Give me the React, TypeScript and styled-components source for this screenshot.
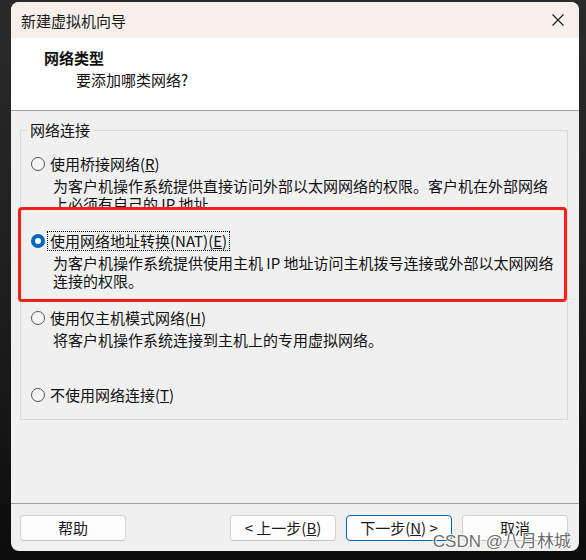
import React from "react";
import styled, { createGlobalStyle, css } from "styled-components";

const GlobalStyle = createGlobalStyle`
  html, body {
    margin: 0;
    padding: 0;
    background: #1f1f1f;
  }
  body {
    font-family: "Noto Sans CJK SC", "Noto Sans", sans-serif;
    color: #111;
  }
  * { box-sizing: border-box; }
`;

const Page = styled.div`
  width: 586px;
  height: 560px;
  padding: 2px 7px 9px 11px;
  background: linear-gradient(180deg, #2a2a2a 0%, #1c1c1c 60%, #0c0c0c 100%);
`;

const Window = styled.div`
  position: relative;
  width: 568px;
  height: 549px;
  display: flex;
  flex-direction: column;
  background: #f0f0f0;
  border-radius: 8px;
  overflow: hidden;
`;

const TitleBar = styled.div`
  height: 36px;
  flex: none;
  display: flex;
  align-items: center;
  justify-content: space-between;
  padding: 0 15px 0 10px;
  background: #f7f0ea;
  font-size: 15px;
  color: #1a1a1a;
`;

const Header = styled.div`
  height: 73px;
  flex: none;
  background: #ffffff;
  border-bottom: 1px solid #a0a0a0;
  padding: 10px 0 0 33px;
`;

const Heading = styled.div`
  font-size: 15px;
  font-weight: 700;
  line-height: 20px;
`;

const SubHeading = styled.div`
  font-size: 15px;
  line-height: 20px;
  margin: 2px 0 0 32px;
`;

const Body = styled.div`
  flex: 1;
  padding: 9px 11px 0 9px;
`;

const Group = styled.fieldset`
  margin: 0;
  padding: 0;
  min-width: 0;
  height: 300px;
  border: 1px solid #dadada;
  border-radius: 0;
`;

const GroupLabel = styled.legend`
  margin-left: 6px;
  padding: 0 3px;
  font-size: 15px;
  line-height: 20px;
`;

const Options = styled.div`
  display: flex;
  flex-direction: column;
  padding-top: 14px;
`;

const Option = styled.div`
  height: 77px;
  display: flex;
  flex-direction: column;
`;

const OptionTitle = styled.div`
  height: 20px;
  display: flex;
  align-items: center;
  gap: 3px;
  padding-left: 10px;
  font-size: 15px;
`;

const Radio = styled.span<{ $checked?: boolean }>`
  width: 14px;
  height: 14px;
  flex: none;
  border-radius: 50%;
  ${(p) =>
    p.$checked
      ? css`
          background: #0067c0;
          display: flex;
          align-items: center;
          justify-content: center;
          &::after {
            content: "";
            width: 6px;
            height: 6px;
            border-radius: 50%;
            background: #ffffff;
          }
        `
      : css`
          border: 1.3px solid #555555;
          background: #f5f5f5;
        `}
`;

const OptionLabel = styled.span<{ $focused?: boolean }>`
  padding: 0 2px;
  line-height: 18px;
  white-space: nowrap;
  ${(p) =>
    p.$focused &&
    css`
      outline: 1px dotted #000;
      outline-offset: 0;
    `}
`;

const Desc = styled.div<{ $clip?: number }>`
  margin-top: 3px;
  padding-left: 32px;
  font-size: 15px;
  line-height: 18px;
  white-space: nowrap;
  ${(p) =>
    p.$clip &&
    css`
      max-height: ${p.$clip}px;
      overflow: hidden;
    `}
`;

const Footer = styled.div`
  height: 48px;
  flex: none;
  display: flex;
  align-items: flex-start;
  gap: 10px;
  padding: 11px 11px 0 9px;
  border-top: 1px solid #a0a0a0;
`;

const Spacer = styled.div`
  flex: 1;
`;

const Button = styled.button<{ $primary?: boolean }>`
  width: 106px;
  height: 26px;
  padding: 0;
  border-radius: 4px;
  border: 1px solid ${(p) => (p.$primary ? "#0067c0" : "#d3d3d3")};
  border-bottom-color: ${(p) => (p.$primary ? "#0067c0" : "#c2c2c2")};
  background: #fdfdfd;
  font-family: "Noto Sans CJK SC", "Noto Sans", sans-serif;
  font-size: 15px;
  line-height: 22px;
  color: #1a1a1a;
`;

const Annotation = styled.div`
  position: absolute;
  left: 7px;
  top: 205px;
  width: 549px;
  height: 95px;
  border: 3px solid #f5201a;
  border-radius: 4px;
  pointer-events: none;
`;

const Watermark = styled.div`
  position: absolute;
  right: 8px;
  bottom: 0;
  font-family: "Liberation Sans", "Noto Sans CJK SC", sans-serif;
  font-size: 17px;
  line-height: 18px;
  color: rgba(70, 70, 70, 0.8);
  text-shadow: 1px 0 rgba(255, 255, 255, 0.8), -1px 0 rgba(255, 255, 255, 0.8),
    0 1px rgba(255, 255, 255, 0.8), 0 -1px rgba(255, 255, 255, 0.8);
  white-space: nowrap;
  pointer-events: none;
`;

const CloseIcon = () => (
  <svg width="12" height="12" viewBox="0 0 12 12" aria-hidden="true">
    <path d="M0.5 0.5L11.5 11.5M11.5 0.5L0.5 11.5" stroke="#1a1a1a" strokeWidth="1.1" fill="none" />
  </svg>
);

export default function App() {
  return (
    <>
      <GlobalStyle />
      <Page>
        <Window>
          <TitleBar>
            <span>新建虚拟机向导</span>
            <CloseIcon />
          </TitleBar>
          <Header>
            <Heading>网络类型</Heading>
            <SubHeading>要添加哪类网络?</SubHeading>
          </Header>
          <Body>
            <Group>
              <GroupLabel>网络连接</GroupLabel>
              <Options>
                <Option>
                  <OptionTitle>
                    <Radio />
                    <OptionLabel>
                      使用桥接网络(<u>R</u>)
                    </OptionLabel>
                  </OptionTitle>
                  <Desc $clip={31}>
                    为客户机操作系统提供直接访问外部以太网网络的权限。客户机在外部网络
                    <br />
                    上必须有自己的 IP 地址。
                  </Desc>
                </Option>
                <Option>
                  <OptionTitle>
                    <Radio $checked />
                    <OptionLabel $focused>
                      使用网络地址转换(NAT)(<u>E</u>)
                    </OptionLabel>
                  </OptionTitle>
                  <Desc>
                    为客户机操作系统提供使用主机 IP 地址访问主机拨号连接或外部以太网网络
                    <br />
                    连接的权限。
                  </Desc>
                </Option>
                <Option>
                  <OptionTitle>
                    <Radio />
                    <OptionLabel>
                      使用仅主机模式网络(<u>H</u>)
                    </OptionLabel>
                  </OptionTitle>
                  <Desc>将客户机操作系统连接到主机上的专用虚拟网络。</Desc>
                </Option>
                <Option>
                  <OptionTitle>
                    <Radio />
                    <OptionLabel>
                      不使用网络连接(<u>T</u>)
                    </OptionLabel>
                  </OptionTitle>
                </Option>
              </Options>
            </Group>
          </Body>
          <Footer>
            <Button>帮助</Button>
            <Spacer />
            <Button>
              &lt; 上一步(<u>B</u>)
            </Button>
            <Button $primary>
              下一步(<u>N</u>) &gt;
            </Button>
            <Button>取消</Button>
          </Footer>
          <Annotation />
          <Watermark>CSDN @八月林城</Watermark>
        </Window>
      </Page>
    </>
  );
}
